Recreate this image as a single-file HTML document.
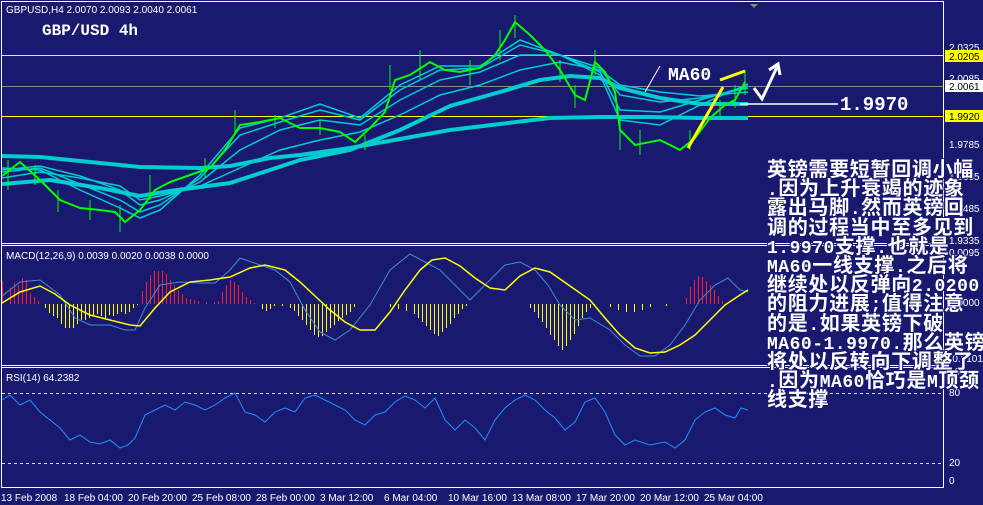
<!DOCTYPE html>
<html><head><meta charset="utf-8"><style>
html,body{margin:0;padding:0;background:#191970;width:983px;height:505px;overflow:hidden}
svg{position:absolute;left:0;top:0}
.cn{position:absolute;left:767px;top:162px;width:220px;font-family:"Liberation Mono","WenQuanYi Zen Hei","Noto Sans CJK SC",monospace;font-weight:bold;font-size:20px;line-height:19.2px;letter-spacing:0.7px;color:#fff;white-space:nowrap;text-shadow:1px 1px 0 #191970,-1px -1px 0 #191970,1px -1px 0 #191970,-1px 1px 0 #191970}
.cn div{height:19.2px;overflow:visible}
.cn b{font-size:18px;letter-spacing:0.5px;line-height:0}
</style></head><body>
<svg width="983" height="505" font-family="Liberation Sans, sans-serif">
<rect width="983" height="505" fill="#191970"/>
<g shape-rendering="crispEdges">
<rect x="1.5" y="1.5" width="942" height="486" fill="none" stroke="#fff" stroke-width="1"/>
<line x1="2" y1="243.5" x2="943" y2="243.5" stroke="#fff"/>
<line x1="2" y1="245.5" x2="943" y2="245.5" stroke="#fff"/>
<line x1="2" y1="365.5" x2="943" y2="365.5" stroke="#fff"/>
<line x1="2" y1="367.5" x2="943" y2="367.5" stroke="#fff"/>
<line x1="2" y1="55.5" x2="943" y2="55.5" stroke="#ffff00"/>
<line x1="2" y1="86.5" x2="943" y2="86.5" stroke="#8a8a8a"/>
<line x1="2" y1="116.5" x2="943" y2="116.5" stroke="#ffff00"/>
</g>
<g fill="none" stroke="#00cdd0">
<polyline stroke-width="4" points="2,156 40,157 100,163 140,167 200,168 230,166 270,158 300,155 350,148 400,139 450,130 500,124 550,118 600,117 650,117 700,118 748,118"/>
<polyline stroke-width="4" points="2,184 50,180 100,188 140,196 170,191 230,183 270,170 300,160 350,150 400,130 450,106 500,92 540,80 570,76 600,78 620,88 660,98 700,104 748,104"/>
<polyline stroke-width="1.5" points="2,178 40,172 80,178 120,186 140,200 160,196 200,186 240,168 280,150 320,140 360,132 400,115 440,95 480,85 520,70 560,62 600,70 620,85 660,92 700,96 748,92"/>
<polyline stroke-width="1.5" points="2,170 40,166 80,176 120,190 140,205 160,200 200,182 240,150 280,130 320,120 360,125 400,100 440,80 480,72 520,55 560,55 600,68 620,95 660,102 700,98 748,88"/>
<polyline stroke-width="1.5" points="2,172 40,168 80,184 120,200 140,212 160,205 200,178 240,135 280,122 320,110 360,120 400,90 440,70 480,68 520,45 560,55 600,72 620,110 660,112 700,100 748,86"/>
<polyline stroke-width="1.5" points="2,168 40,170 80,190 120,208 140,218 160,210 200,175 240,128 280,118 320,104 360,118 400,85 440,66 480,66 520,40 560,55 600,75 620,120 660,125 700,105 748,84"/>
</g>
<g fill="none" stroke="#00ff00">
<polyline stroke-width="2" points="2,176 20,162 40,180 60,200 80,208 100,210 115,212 125,222 140,210 155,190 170,182 190,175 210,168 225,150 240,125 260,122 280,118 300,128 320,128 340,132 355,142 370,128 385,112 395,80 410,75 430,62 445,70 460,72 480,68 495,55 505,40 515,22 530,35 545,50 560,70 575,95 585,100 595,62 605,72 615,92 620,130 635,145 660,140 680,150 695,138 710,118 725,105 735,100 745,82"/>
<path stroke-width="1" d="M8 160V190M35 165V185M58 190V212M90 200V220M120 205V232M150 175V200M205 158V178M235 110V135M275 115V128M320 120V135M365 135V150M390 65V90M420 50V80M470 60V85M500 30V60M515 15V38M560 60V82M575 85V108M595 50V75M620 120V150M640 130V155M690 130V150M720 100V120M735 85V108M745 70V95"/>
</g>
<line x1="740" y1="104" x2="838" y2="104" stroke="#fff" stroke-width="1.5"/>
<text x="840" y="110" fill="#fff" font-size="19" font-weight="bold" font-family="Liberation Mono, monospace">1.9970</text>
<text x="668" y="80" fill="#fff" font-size="18" font-weight="bold" font-family="Liberation Mono, monospace">MA60</text>
<line x1="660" y1="66" x2="645" y2="92" stroke="#fff"/>
<line x1="688" y1="148" x2="723" y2="87" stroke="#ffff00" stroke-width="3"/>
<line x1="720" y1="80" x2="745" y2="71" stroke="#ffff00" stroke-width="3"/>
<polyline points="754,88 762,99 777,67" fill="none" stroke="#fff" stroke-width="3"/>
<polyline points="769,70 778,64 780,75" fill="none" stroke="#fff" stroke-width="3"/>
<text x="6" y="13" fill="#fff" font-size="10">GBPUSD,H4  2.0070 2.0093 2.0040 2.0061</text>
<text x="42" y="35" fill="#fff" font-size="16" font-weight="bold" font-family="Liberation Mono, monospace">GBP/USD 4h</text>
<path d="M9 4 L17 4 L13 8Z" fill="#888" transform="translate(741,0)"/>
<g font-size="10" fill="#fff">
<text x="949" y="51">2.0325</text>
<rect x="945" y="50" width="38" height="12" fill="#ffff00"/><text x="949" y="60" fill="#000">2.0205</text>
<text x="949" y="82">2.0085</text>
<rect x="945" y="80" width="38" height="12" fill="#fff"/><text x="949" y="90" fill="#000">2.0061</text>
<rect x="945" y="110" width="38" height="12" fill="#ffff00"/><text x="949" y="120" fill="#000">1.9920</text>
<text x="949" y="148">1.9785</text>
<text x="949" y="180">1.9635</text>
<text x="949" y="212">1.9485</text>
<text x="949" y="244">1.9335</text>
<text x="949" y="256">0.0095</text>
<text x="949" y="306">0.0000</text>
<text x="949" y="362">-0.0101</text>
<text x="949" y="375">100</text>
<text x="949" y="396">80</text>
<text x="949" y="466">20</text>
<text x="949" y="484">0</text>
</g>
<text x="6" y="259" fill="#fff" font-size="10">MACD(12,26,9) 0.0039 0.0020 0.0038 0.0000</text>
<g stroke="#ff1a2a" stroke-width="1" shape-rendering="crispEdges" transform="translate(0.5,0)">
<path d="M2 281V304M10 288V304M14 283V304M18 285V304M22 278V304M26 280V304M30 293V304M34 297V304M38 301V304M142 291V304M146 282V304M150 275V304M154 271V304M158 271V304M162 271V304M166 274V304M170 280V304M174 285V304M178 290V304M182 294V304M186 298V304M190 299V304M194 300V304M198 301V304M206 302V304M214 302V304M218 301V304M222 292V304M226 285V304M230 280V304M234 282V304M238 285V304M242 292V304M246 297V304M250 300V304M254 303V304M686 298V304M690 287V304M694 280V304M698 276V304M702 277V304M706 281V304M710 285V304M714 290V304M718 296V304M722 301V304"/>
</g>
<g stroke="#ffff00" stroke-width="1" shape-rendering="crispEdges" transform="translate(0.5,0)">
<path d="M45 304V308M49 304V313M53 304V316M57 304V318M61 304V324M65 304V328M69 304V328M73 304V328M77 304V324M81 304V320M85 304V320M89 304V318M93 304V316M97 304V314M101 304V316M105 304V318M109 304V315M113 304V316M117 304V314M121 304V312M125 304V314M129 304V312M133 304V308M137 304V305M262 304V309M266 304V311M270 304V309M274 304V306M282 304V306M290 304V308M294 304V311M298 304V316M302 304V320M306 304V325M310 304V330M314 304V335M318 304V337M322 304V336M326 304V332M330 304V328M334 304V325M338 304V321M342 304V318M346 304V315M350 304V312M354 304V307M390 304V307M398 304V309M406 304V311M414 304V314M418 304V318M422 304V322M426 304V326M430 304V330M434 304V334M438 304V336M442 304V332M446 304V328M450 304V324M454 304V318M458 304V314M462 304V309M466 304V306M530 304V308M534 304V312M538 304V318M542 304V322M546 304V328M550 304V335M554 304V340M558 304V346M562 304V350M566 304V346M570 304V340M574 304V334M578 304V326M582 304V318M586 304V312M590 304V308M594 304V305M610 304V307M618 304V310M626 304V312M634 304V312M642 304V310M650 304V307M666 304V306"/>
</g>
<polyline fill="none" stroke="#3f8fcf" stroke-width="1" points="2,296 20,282 40,280 60,295 75,318 90,325 110,325 125,330 135,330 145,308 160,285 180,282 200,283 215,283 230,270 240,258 260,265 275,270 290,282 305,310 320,332 335,340 350,330 370,305 390,270 410,254 425,262 440,270 455,285 470,300 490,280 505,265 520,262 535,270 548,285 560,305 575,320 590,318 610,330 625,345 640,356 655,356 670,345 685,325 700,300 715,285 728,278 740,290 748,292"/>
<polyline fill="none" stroke="#ffff00" stroke-width="1.5" points="2,303 20,292 40,286 55,294 70,305 90,315 110,320 130,325 140,326 155,308 170,292 190,282 210,280 230,277 250,268 265,265 285,270 300,282 315,296 330,310 345,322 360,330 375,330 390,312 405,290 420,270 432,260 445,258 460,266 475,278 490,288 505,290 520,276 535,268 550,272 570,286 590,300 605,318 620,335 635,348 650,353 665,352 680,345 695,335 710,320 725,305 740,295 748,290"/>
<text x="6" y="381" fill="#fff" font-size="10">RSI(14) 64.2382</text>
<line x1="2" y1="393.5" x2="943" y2="393.5" stroke="#ddd" stroke-dasharray="3,3" shape-rendering="crispEdges"/>
<line x1="2" y1="463.5" x2="943" y2="463.5" stroke="#ddd" stroke-dasharray="3,3" shape-rendering="crispEdges"/>
<polyline fill="none" stroke="#1e90ff" stroke-width="1" points="2,400 10,395 20,405 30,400 40,412 50,420 60,428 70,440 80,435 90,442 100,444 110,440 120,448 128,445 135,438 145,415 155,410 165,405 175,410 185,402 195,405 205,410 215,405 225,398 235,393 245,412 255,415 265,422 275,412 285,408 295,412 305,398 315,395 325,400 335,405 345,410 355,420 365,425 375,415 385,412 395,402 405,396 415,400 425,408 435,398 445,420 455,430 465,420 475,428 485,440 495,420 505,408 515,400 525,395 535,400 545,410 555,418 565,430 575,422 585,402 595,398 605,412 615,435 625,445 635,440 650,445 665,442 675,448 685,440 695,420 705,412 715,408 725,415 735,418 741,408 748,410"/>
<g font-size="10" fill="#fff">
<text x="1" y="501">13 Feb 2008</text>
<text x="64" y="501">18 Feb 04:00</text>
<text x="128" y="501">20 Feb 20:00</text>
<text x="192" y="501">25 Feb 08:00</text>
<text x="256" y="501">28 Feb 00:00</text>
<text x="320" y="501">3 Mar 12:00</text>
<text x="384" y="501">6 Mar 04:00</text>
<text x="448" y="501">10 Mar 16:00</text>
<text x="512" y="501">13 Mar 08:00</text>
<text x="576" y="501">17 Mar 20:00</text>
<text x="640" y="501">20 Mar 12:00</text>
<text x="704" y="501">25 Mar 04:00</text>
</g>
</svg>
<div class="cn"><div>英镑需要短暂回调小幅</div><div><b>.</b>因为上升衰竭的迹象</div><div>露出马脚<b>.</b>然而英镑回</div><div>调的过程当中至多见到</div><div><b>1.9970</b>支撑<b>.</b>也就是</div><div><b>MA60</b>一线支撑<b>.</b>之后将</div><div>继续处以反弹向<b>2.0200</b></div><div>的阻力进展<b>;</b>值得注意</div><div>的是<b>.</b>如果英镑下破</div><div><b>MA60-1.9970.</b>那么英镑</div><div>将处以反转向下调整了</div><div><b>.</b>因为<b>MA60</b>恰巧是<b>M</b>顶颈</div><div>线支撑</div></div>
</body></html>
